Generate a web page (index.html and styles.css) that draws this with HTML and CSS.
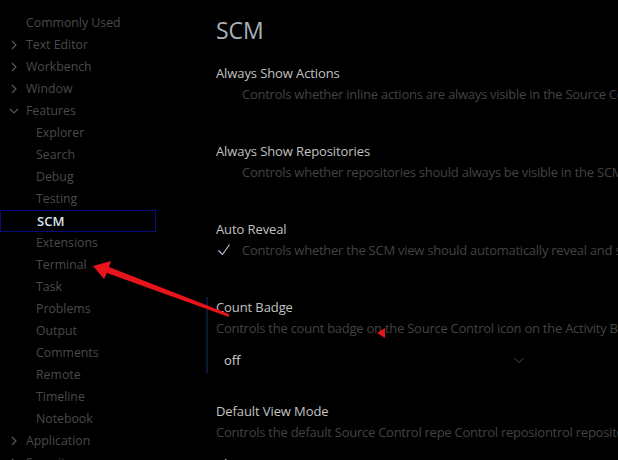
FILE: index.html
```html
<!DOCTYPE html>
<html>
<head>
<meta charset="utf-8">
<link rel="stylesheet" href="styles.css">
</head>
<body>
<div class="page">
  <nav class="tree">
    <div class="row top"><span class="twisty"></span><span>Commonly Used</span></div>
    <div class="row top"><span class="twisty"><svg viewBox="0 0 16 16"><path d="M6 4l4 4-4 4"/></svg></span><span>Text Editor</span></div>
    <div class="row top"><span class="twisty"><svg viewBox="0 0 16 16"><path d="M6 4l4 4-4 4"/></svg></span><span>Workbench</span></div>
    <div class="row top"><span class="twisty"><svg viewBox="0 0 16 16"><path d="M6 4l4 4-4 4"/></svg></span><span>Window</span></div>
    <div class="row top"><span class="twisty"><svg viewBox="0 0 16 16"><path d="M4 6l4 4 4-4"/></svg></span><span>Features</span></div>
    <div class="row child">Explorer</div>
    <div class="row child">Search</div>
    <div class="row child">Debug</div>
    <div class="row child">Testing</div>
    <div class="row child selected">SCM</div>
    <div class="row child">Extensions</div>
    <div class="row child">Terminal</div>
    <div class="row child">Task</div>
    <div class="row child">Problems</div>
    <div class="row child">Output</div>
    <div class="row child">Comments</div>
    <div class="row child">Remote</div>
    <div class="row child">Timeline</div>
    <div class="row child">Notebook</div>
    <div class="row top"><span class="twisty"><svg viewBox="0 0 16 16"><path d="M6 4l4 4-4 4"/></svg></span><span>Application</span></div>
    <div class="row top"><span class="twisty"><svg viewBox="0 0 16 16"><path d="M6 4l4 4-4 4"/></svg></span><span>Security</span></div>
  </nav>
  <main class="content">
    <h1 class="heading">SCM</h1>
    <div class="setting">
      <div class="title">Always Show Actions</div>
      <div class="desc"><span class="check"></span><span class="text">Controls whether inline actions are always visible in the Source Control view.</span></div>
    </div>
    <div class="setting">
      <div class="title">Always Show Repositories</div>
      <div class="desc"><span class="check"></span><span class="text">Controls whether repositories should always be visible in the SCM view.</span></div>
    </div>
    <div class="setting">
      <div class="title">Auto Reveal</div>
      <div class="desc"><span class="check"><svg viewBox="0 0 16 16"><path d="M2.5 8.5l4 4 7-10"/></svg></span><span class="text">Controls whether the SCM view should automatically reveal and select files when opening them.</span></div>
    </div>
    <div class="setting focused">
      <div class="title">Count Badge</div>
      <div class="desc plain"><span class="text">Controls the count badge on the Source Control icon on the Activity Bar.</span></div>
      <div class="select"><span>off</span><svg viewBox="0 0 16 16"><path d="M3 6l5 5 5-5"/></svg></div>
    </div>
    <div class="setting">
      <div class="title">Default View Mode</div>
      <div class="desc plain"><span class="text">Controls the default Source Control repe Control reposiontrol repository view mode.</span></div>
      <div class="select"><span>list</span></div>
    </div>
  </main>
</div>
<svg class="annotation" viewBox="0 0 618 460" width="618" height="460">
  <polygon points="93,266 111,261 109,267 229,314 229,317 107,273 104,279" fill="#e8141b"/>
  <polygon points="377,333 385,328 385,338" fill="#e8141b"/>
</svg>
</body>
</html>
```
FILE: styles.css
```css
html, body {
  margin: 0;
  padding: 0;
  background: #000;
  width: 618px;
  height: 460px;
  overflow: hidden;
  font-family: "Open Sans", "Noto Sans", sans-serif;
  font-size: 13px;
}

.page {
  display: flex;
  height: 460px;
  overflow: hidden;
}

.tree {
  width: 156px;
  flex: none;
  padding-top: 12px;
  color: #4a4a4a;
  font-size: 12.3px;
}

.row {
  height: 22px;
  line-height: 22px;
  white-space: nowrap;
  box-sizing: border-box;
  display: flex;
  align-items: center;
}

.row.top {
  padding-left: 6px;
}

.twisty {
  width: 20px;
  height: 16px;
  display: inline-flex;
  align-items: center;
}

.twisty svg {
  width: 16px;
  height: 16px;
  fill: none;
  stroke: #5a5a5a;
  stroke-width: 1.1;
}

.row.child {
  padding-left: 36px;
}

.row.selected {
  border: 1px solid #0b0b7d;
  color: #d8e2ec;
  font-weight: 600;
  font-size: 13px;
}

.content {
  flex: 1;
  min-width: 0;
  padding: 15px 0 0 50px;
}

.heading {
  margin: 0 0 18px 10px;
  font-size: 23px;
  line-height: 30px;
  font-weight: 400;
  color: #a9b0b8;
}

.setting {
  border-left: 2px solid transparent;
  padding-left: 8px;
  padding-bottom: 2px;
  margin-bottom: 34px;
}

.setting.focused {
  border-left-color: #0c1838;
  margin-bottom: 28px;
}

.title {
  line-height: 20px;
  color: #c2c2c2;
  white-space: nowrap;
  letter-spacing: -0.1px;
}

.desc {
  display: flex;
  height: 22px;
  line-height: 22px;
  color: #434343;
  white-space: nowrap;
  overflow: hidden;
  letter-spacing: -0.25px;
}

.check {
  width: 26px;
  flex: none;
  display: flex;
  align-items: center;
}

.check svg {
  width: 16px;
  height: 16px;
  fill: none;
  stroke: #b8c8e8;
  stroke-width: 1.1;
}

.desc .text {
  flex: none;
}

.select {
  margin-top: 10px;
  width: 314px;
  height: 22px;
  display: flex;
  align-items: center;
  justify-content: space-between;
  padding: 0 4px 0 8px;
  box-sizing: border-box;
  color: #d0d0d0;
}

.select svg {
  width: 14px;
  height: 14px;
  fill: none;
  stroke: #5a5a5a;
  stroke-width: 1;
}

.annotation {
  position: absolute;
  left: 0;
  top: 0;
  pointer-events: none;
}
```
